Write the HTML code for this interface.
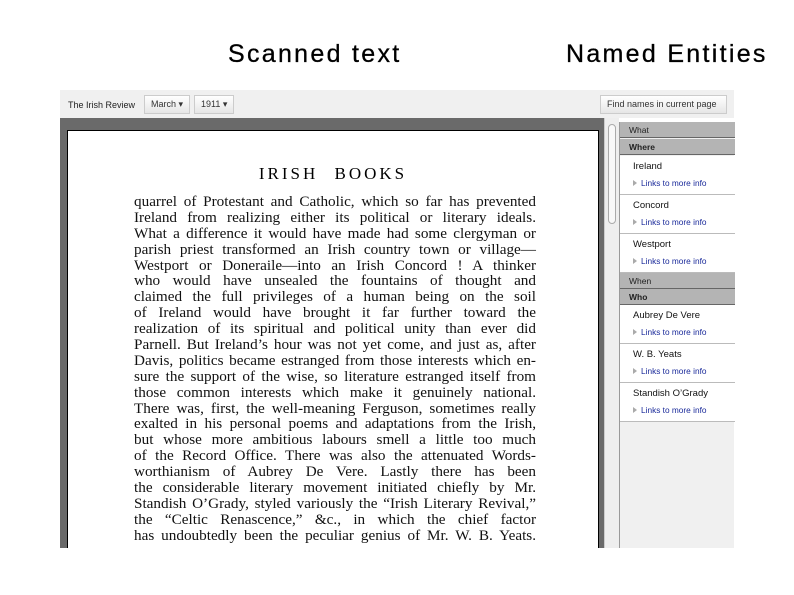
<!DOCTYPE html>
<html><head><meta charset="utf-8"><style>
*{margin:0;padding:0;box-sizing:border-box}
body{width:794px;height:595px;background:#fff;position:relative;overflow:hidden;font-family:"Liberation Sans",sans-serif}
.h{position:absolute;top:40px;font-size:25px;color:#000;letter-spacing:2.3px;-webkit-text-stroke:0.3px #000}
.abs{position:absolute}
.tb{left:60px;top:90px;width:674px;height:28px;background:#f0f0f0}
.btn{position:absolute;top:5px;height:19px;border:1px solid #ccc;background:linear-gradient(#fff,#e6e6e6);font-size:9px;line-height:17px;padding:0 6px;color:#333}
.dark{left:60px;top:118px;width:545px;height:430px;background:#6a6a6a}
.page{left:67px;top:130px;width:532px;height:418px;background:#fff;border:1px solid #000;border-bottom:none;overflow:hidden}
.txt{position:absolute;left:66px;top:63px;width:402px;font-family:"Liberation Serif",serif;font-size:15.2px;line-height:15.9px;color:#111}
.txt div{text-align:justify;text-align-last:justify;white-space:nowrap;height:15.9px;overflow:visible}
.sb{left:604px;top:118px;width:15px;height:430px;background:#eee;border-left:1px solid #ccc}
.thumb{position:absolute;left:3px;top:6px;width:8px;height:100px;border:1px solid #aaa;border-radius:4px;background:#f8f8f8}
.side{left:619px;top:122px;width:115px;height:426px;background:#f0f0f0;border-left:1px solid #999}
.hd{position:absolute;left:0;width:115px;height:16px;background:#b4b4b4;border-bottom:1px solid #666;font-size:8.5px;line-height:16px;padding-left:9px;color:#222}
.it{position:absolute;left:0;width:115px;height:39px;background:#fff;border-bottom:1px solid #bbb}
.it .n{position:absolute;left:13px;top:5px;font-size:9.5px;color:#111}
.it .l{position:absolute;left:13px;top:22px;font-size:8.3px;color:#1a2a9a}
.it .l:before{content:"";display:inline-block;border-left:4px solid #aaa;border-top:3px solid transparent;border-bottom:3px solid transparent;margin-right:4px}
</style></head><body>
<div class="h" style="left:228px">Scanned text</div>
<div class="h" style="left:566px">Named Entities</div>
<div class="abs tb">
 <div class="abs" style="left:8px;top:10px;font-size:9px;color:#222">The Irish Review</div>
 <div class="btn" style="left:84px">March ▾</div>
 <div class="btn" style="left:134px">1911 ▾</div>
 <div class="btn" style="left:540px;width:127px">Find names in current page</div>
</div>
<div class="abs dark"></div>
<div class="abs page">
 <div class="abs" style="left:0;width:530px;top:33px;text-align:center;font-family:'Liberation Serif',serif;font-size:17px;letter-spacing:3px;word-spacing:9px">IRISH BOOKS</div>
 <div class="txt">
<div>quarrel of Protestant and Catholic, which so far has prevented</div>
<div>Ireland from realizing either its political or literary ideals.</div>
<div>What a difference it would have made had some clergyman or</div>
<div>parish priest transformed an Irish country town or village—</div>
<div>Westport or Doneraile—into an Irish Concord ! A thinker</div>
<div>who would have unsealed the fountains of thought and</div>
<div>claimed the full privileges of a human being on the soil</div>
<div>of Ireland would have brought it far further toward the</div>
<div>realization of its spiritual and political unity than ever did</div>
<div>Parnell. But Ireland’s hour was not yet come, and just as, after</div>
<div>Davis, politics became estranged from those interests which en-</div>
<div>sure the support of the wise, so literature estranged itself from</div>
<div>those common interests which make it genuinely national.</div>
<div>There was, first, the well-meaning Ferguson, sometimes really</div>
<div>exalted in his personal poems and adaptations from the Irish,</div>
<div>but whose more ambitious labours smell a little too much</div>
<div>of the Record Office. There was also the attenuated Words-</div>
<div>worthianism of Aubrey De Vere. Lastly there has been</div>
<div>the considerable literary movement initiated chiefly by Mr.</div>
<div>Standish O’Grady, styled variously the “Irish Literary Revival,”</div>
<div>the “Celtic Renascence,” &amp;c., in which the chief factor</div>
<div>has undoubtedly been the peculiar genius of Mr. W. B. Yeats.</div>
 </div>
</div>
<div class="abs sb"><div class="thumb"></div></div>
<div class="abs side">
 <div class="hd" style="top:0">What</div>
 <div class="hd" style="top:17px;font-weight:bold">Where</div>
 <div class="it" style="top:34px"><div class="n">Ireland</div><div class="l">Links to more info</div></div>
 <div class="it" style="top:73px"><div class="n">Concord</div><div class="l">Links to more info</div></div>
 <div class="it" style="top:112px"><div class="n">Westport</div><div class="l">Links to more info</div></div>
 <div class="hd" style="top:151px">When</div>
 <div class="hd" style="top:167px;font-weight:bold">Who</div>
 <div class="it" style="top:183px"><div class="n">Aubrey De Vere</div><div class="l">Links to more info</div></div>
 <div class="it" style="top:222px"><div class="n">W. B. Yeats</div><div class="l">Links to more info</div></div>
 <div class="it" style="top:261px"><div class="n">Standish O’Grady</div><div class="l">Links to more info</div></div>
</div>
</body></html>
